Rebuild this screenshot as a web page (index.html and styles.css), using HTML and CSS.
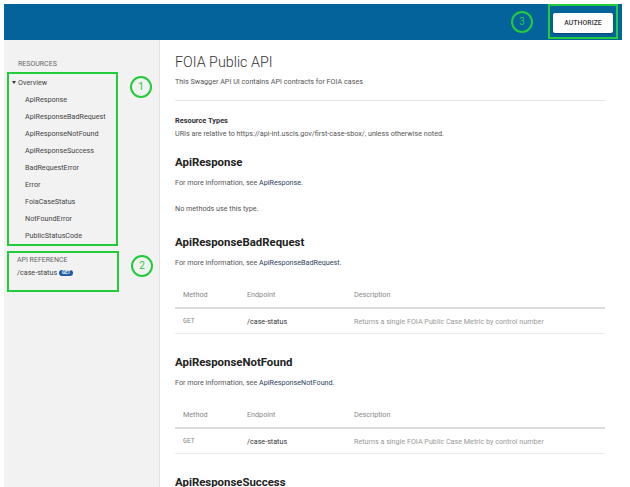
FILE: index.html
```html
<!DOCTYPE html>
<html lang="en">
<head>
<meta charset="utf-8">
<title>FOIA Public API</title>
<link rel="stylesheet" href="styles.css">
</head>
<body>
<div class="frame">
  <header class="topbar">
    <span class="anno-circle">3</span>
    <div class="anno-box auth-wrap"><button class="authorize">AUTHORIZE</button></div>
  </header>
  <div class="layout">
    <aside class="sidebar">
      <div class="side-label res-label">RESOURCES</div>
      <div class="side-row">
        <div class="anno-box nav-box">
          <div class="nav-parent"><span class="caret"></span>Overview</div>
          <ul class="nav-list">
            <li>ApiResponse</li>
            <li>ApiResponseBadRequest</li>
            <li>ApiResponseNotFound</li>
            <li>ApiResponseSuccess</li>
            <li>BadRequestError</li>
            <li>Error</li>
            <li>FoiaCaseStatus</li>
            <li>NotFoundError</li>
            <li>PublicStatusCode</li>
          </ul>
        </div>
        <span class="anno-circle">1</span>
      </div>
      <div class="side-row ref-row">
        <div class="anno-box ref-box">
          <div class="side-label">API REFERENCE</div>
          <div class="ref-item">/case-status <span class="badge">GET</span></div>
        </div>
        <span class="anno-circle circle-2">2</span>
      </div>
    </aside>
    <main class="content">
      <h1 class="title">FOIA Public API</h1>
      <p class="lead">This Swagger API UI contains API contracts for FOIA cases</p>
      <hr class="rule">
      <h3 class="subhead">Resource Types</h3>
      <p class="note">URIs are relative to https://api-int.uscis.gov/first-case-sbox/, unless otherwise noted.</p>

      <section class="type first">
        <h2>ApiResponse</h2>
        <p>For more information, see <a class="link">ApiResponse</a>.</p>
        <p class="none">No methods use this type.</p>
      </section>

      <section class="type">
        <h2>ApiResponseBadRequest</h2>
        <p>For more information, see <a class="link">ApiResponseBadRequest</a>.</p>
        <table class="methods">
          <thead><tr><th class="c1">Method</th><th class="c2">Endpoint</th><th>Description</th></tr></thead>
          <tbody><tr><td class="mono">GET</td><td class="ep">/case-status</td><td class="desc">Returns a single FOIA Public Case Metric by control number</td></tr></tbody>
        </table>
      </section>

      <section class="type">
        <h2>ApiResponseNotFound</h2>
        <p>For more information, see <a class="link">ApiResponseNotFound</a>.</p>
        <table class="methods">
          <thead><tr><th class="c1">Method</th><th class="c2">Endpoint</th><th>Description</th></tr></thead>
          <tbody><tr><td class="mono">GET</td><td class="ep">/case-status</td><td class="desc">Returns a single FOIA Public Case Metric by control number</td></tr></tbody>
        </table>
      </section>

      <section class="type">
        <h2>ApiResponseSuccess</h2>
      </section>
    </main>
  </div>
</div>
</body>
</html>
```

FILE: styles.css
```css
body {
  margin: 0;
  background: #fff;
  font-family: Roboto, "Liberation Sans", sans-serif;
}

.frame {
  margin: 4px 8px 0 4px;
  height: 483px;
  display: flex;
  flex-direction: column;
  overflow: hidden;
}

.topbar {
  flex: none;
  height: 36px;
  background: #03639a;
  display: flex;
  align-items: center;
  justify-content: flex-end;
  gap: 15px;
  padding-right: 4px;
}

.anno-circle {
  flex: none;
  width: 18px;
  height: 18px;
  border: 2px solid #22cc3a;
  border-radius: 50%;
  color: #22cc3a;
  font-size: 10px;
  line-height: 1;
  display: flex;
  align-items: center;
  justify-content: center;
}

.anno-box {
  box-sizing: border-box;
  border: 2px solid #22cc3a;
}

.auth-wrap {
  align-self: flex-start;
  height: 35px;
  padding: 2px 3px 0;
  display: flex;
  align-items: center;
}

.authorize {
  width: 60px;
  height: 20px;
  background: #fff;
  border: none;
  border-radius: 2px;
  font-family: Roboto, "Liberation Sans", sans-serif;
  font-size: 6.8px;
  font-weight: 500;
  color: #333;
  letter-spacing: 0.1px;
  box-shadow: 0 1px 2px rgba(0, 0, 0, 0.3);
  padding: 0;
}

.layout {
  flex: 1;
  min-height: 0;
  display: flex;
}

.sidebar {
  flex: none;
  width: 156px;
  box-sizing: border-box;
  background: #f2f2f2;
  border-right: 1px solid #e3e3e3;
  padding: 19px 0 0 3px;
}

.side-label {
  font-size: 7px;
  line-height: 10px;
  color: #666;
}

.res-label {
  padding-left: 11px;
}

.side-row {
  display: flex;
  align-items: flex-start;
  gap: 12px;
  margin-top: 3px;
}

.side-row .anno-circle {
  margin-top: 4px;
}

.ref-row {
  margin-top: 5px;
}

.nav-box {
  width: 111px;
}

.nav-parent {
  display: flex;
  align-items: center;
  font-size: 7.2px;
  line-height: 17px;
  color: #444;
  padding-left: 3px;
}

.caret {
  width: 0;
  height: 0;
  border-left: 2.5px solid transparent;
  border-right: 2.5px solid transparent;
  border-top: 3px solid #333;
  margin-right: 2px;
}

.nav-list {
  list-style: none;
  margin: 0;
  padding: 0 0 0 16px;
}

.nav-list li {
  font-size: 7.2px;
  line-height: 17px;
  color: #444;
}

.ref-box {
  width: 112px;
  padding: 2px 0 9px 8px;
}

.ref-item {
  font-size: 7.2px;
  line-height: 16px;
  color: #444;
}

.badge {
  display: inline-block;
  background: #1f5ea4;
  color: #fff;
  font-size: 4.5px;
  font-weight: 700;
  line-height: 6px;
  padding: 0 3px;
  border-radius: 4px;
  vertical-align: 1px;
}

.content {
  flex: 1;
  min-width: 0;
  padding: 13px 17px 0 15px;
  color: #555;
  font-size: 7.2px;
  overflow: hidden;
}

.title {
  margin: 0;
  font-size: 14.3px;
  font-weight: 300;
  line-height: 18px;
  color: #333;
}

.lead {
  margin: 6px 0 0;
  line-height: 10px;
}

.rule {
  border: 0;
  border-top: 1px solid #e6e6e6;
  margin: 13px 0 0;
}

.subhead {
  margin: 15px 0 0;
  font-size: 7.4px;
  font-weight: 700;
  line-height: 10px;
  color: #333;
}

.note {
  margin: 3px 0 0;
  line-height: 10px;
}

.type {
  margin-top: 21px;
}

.type.first {
  margin-top: 16px;
}

.type h2 {
  margin: 0;
  font-size: 11.4px;
  font-weight: 700;
  line-height: 14px;
  color: #222;
}

.type p {
  margin: 9px 0 0;
  line-height: 10px;
}

.type p.none {
  margin-top: 16px;
}

.link {
  color: #2b3f5c;
  text-decoration: none;
}

.methods {
  width: 100%;
  margin-top: 14px;
  border-collapse: collapse;
  font-size: 7.2px;
}

.methods th {
  text-align: left;
  font-weight: 400;
  color: #888;
  height: 25px;
  padding: 0 6px 0 8px;
  border-bottom: 2px solid #dcdcdc;
}

.methods td {
  height: 24px;
  padding: 0 6px 0 8px;
  border-bottom: 1px solid #eaeaea;
}

.methods .c1 {
  width: 50px;
}

.methods .c2 {
  width: 93px;
}

.mono {
  font-family: "Liberation Mono", monospace;
  font-size: 6.5px;
  color: #888;
}

.ep {
  color: #333;
}

.desc {
  color: #999;
}
```
